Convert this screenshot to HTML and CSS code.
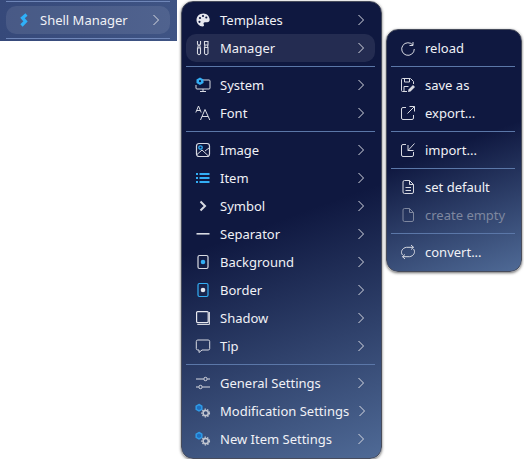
FILE: index.html
```html
<!DOCTYPE html>
<html lang="en">
<head>
  <meta charset="UTF-8">
  <title>Shell Manager</title>
  <link rel="stylesheet" href="styles.css">
</head>
<body>
  <svg class="defs" width="0" height="0">
    <symbol id="chev" viewBox="0 0 8 12"><path d="M1.5 1l5 5-5 5" fill="none" stroke="currentColor" stroke-width="1"/></symbol>
    <symbol id="gears" viewBox="0 0 16 16">
      <path d="M4 1.500l2.800 1.600v3.300L4 8 1.200 6.400V3.100z" fill="#1f6fc0" stroke="#2f9be8" stroke-width="1.500"/>
      <circle cx="10.700" cy="10" r="2.600" fill="none" stroke="#c4c8d2" stroke-width="1.500"/>
      <circle cx="10.700" cy="10" r="3.800" fill="none" stroke="#c4c8d2" stroke-width="1.200" stroke-dasharray="1.500 1.200"/>
    </symbol>
  </svg>

  <div class="strip">
    <div class="sep"></div>
    <div class="row row-on">
      <svg class="ico" viewBox="0 0 16 16"><path d="M11.500 2.500L7.500 6l3 3.500-4 4" fill="none" stroke="#2fb0f8" stroke-width="3.200"/></svg>
      <span class="label">Shell Manager</span>
      <svg class="chev"><use href="#chev"/></svg>
    </div>
    <div class="sep"></div>
  </div>

  <div class="menu menu-main">
    <div class="row">
      <svg class="ico" viewBox="0 0 16 16"><path d="M8.500 1.500C4.500 1.500 1.500 4.300 1.500 8c0 3.500 3 6.500 6 6.500 1.600 0 1.800-1.200 1.300-2-.6-1-.2-2.200 1.200-2.200h2.200c1.600 0 2.500-1 2.500-2.500 0-3.400-2.800-6.300-6.200-6.300z" fill="#e6e7ee"/><circle cx="5" cy="6" r="1.100" fill="#0f1840"/><circle cx="8" cy="4" r="1.100" fill="#0f1840"/><circle cx="11.300" cy="5.500" r="1.100" fill="#0f1840"/><circle cx="4.500" cy="9.800" r="1.100" fill="#0f1840"/></svg>
      <span class="label">Templates</span>
      <svg class="chev"><use href="#chev"/></svg>
    </div>
    <div class="row row-on">
      <svg class="ico" viewBox="0 0 16 16" fill="none" stroke="#d8dae2" stroke-width="1.100"><path d="M2.500 1v3l1 1.200h1l1-1.200V1M3 5.500v2.500M5 5.500v2.500M2.500 8h3v5.500q-1.500 2.200-3 0z"/><path d="M9.500 1.500h3.500v3.500H9.500zM9.800 5v2.500h2.900V5M9.500 7.500h3.500v6q-1.750 2.200-3.500 0z"/></svg>
      <span class="label">Manager</span>
      <svg class="chev"><use href="#chev"/></svg>
    </div>
    <div class="sep"></div>
    <div class="row">
      <svg class="ico" viewBox="0 0 16 16" fill="none" stroke="#d8dae2"><path d="M6 3h8q1 0 1 1v7q0 1-1 1H2q-1 0-1-1V8M5 14.500h6M8 12v2.500"/><path d="M5 .5l3.500 2v3.500L5 8 1.500 6V2.500z" fill="#33aef5" stroke="none"/><circle cx="5" cy="4.200" r="1.100" fill="#0f1840" stroke="none"/></svg>
      <span class="label">System</span>
      <svg class="chev"><use href="#chev"/></svg>
    </div>
    <div class="row">
      <svg class="ico" viewBox="0 0 16 16" fill="none" stroke="#d8dae2"><path d="M.8 7.500L3.500 1l2.700 6.500M1.800 5.500h3.400"/><path d="M5.500 15L10 4.500 14.800 15M7 11.500h6"/></svg>
      <span class="label">Font</span>
      <svg class="chev"><use href="#chev"/></svg>
    </div>
    <div class="sep"></div>
    <div class="row">
      <svg class="ico" viewBox="0 0 16 16" fill="none" stroke="#d8dae2"><rect x="1.500" y="1.500" width="13" height="13" rx="2.500" stroke-width="1.200"/><path d="M2 12.500L7 8l6.500 6"/><path d="M10 9l4-3"/><circle cx="5.500" cy="5.500" r="1.700" stroke="#33aef5" stroke-width="1.300"/></svg>
      <span class="label">Image</span>
      <svg class="chev"><use href="#chev"/></svg>
    </div>
    <div class="row">
      <svg class="ico" viewBox="0 0 16 16" fill="#33aef5"><rect x="1" y="3" width="2" height="2"/><rect x="1" y="7" width="2" height="2"/><rect x="1" y="11" width="2" height="2"/><rect x="4.500" y="3" width="10" height="2"/><rect x="4.500" y="7" width="10" height="2"/><rect x="4.500" y="11" width="10" height="2"/></svg>
      <span class="label">Item</span>
      <svg class="chev"><use href="#chev"/></svg>
    </div>
    <div class="row">
      <svg class="ico" viewBox="0 0 16 16"><path d="M5.500 3.500L10 8l-4.500 4.500" fill="none" stroke="#d8dae2" stroke-width="2"/></svg>
      <span class="label">Symbol</span>
      <svg class="chev"><use href="#chev"/></svg>
    </div>
    <div class="row">
      <svg class="ico" viewBox="0 0 16 16"><rect x="1.500" y="7" width="13" height="1.600" fill="#d8dae2"/></svg>
      <span class="label">Separator</span>
      <svg class="chev"><use href="#chev"/></svg>
    </div>
    <div class="row">
      <svg class="ico" viewBox="0 0 16 16"><rect x="3" y="1.500" width="10" height="13" rx="1.500" fill="none" stroke="#d8dae2" stroke-width="1.200"/><circle cx="8" cy="8" r="2.300" fill="#33aef5"/></svg>
      <span class="label">Background</span>
      <svg class="chev"><use href="#chev"/></svg>
    </div>
    <div class="row">
      <svg class="ico" viewBox="0 0 16 16"><rect x="3" y="1.500" width="10" height="13" rx="1.500" fill="none" stroke="#33aef5" stroke-width="1.200"/><circle cx="8" cy="8" r="2.300" fill="#e6e7ee"/></svg>
      <span class="label">Border</span>
      <svg class="chev"><use href="#chev"/></svg>
    </div>
    <div class="row">
      <svg class="ico" viewBox="0 0 16 16"><rect x="1.600" y="1.600" width="11.600" height="11" rx="1" fill="none" stroke="#e6e7ee" stroke-width="1.200"/><path d="M13.800 2H15v12q0 1-1 1H3q-1 0-1-1h11.800z" fill="#d0d2da"/></svg>
      <span class="label">Shadow</span>
      <svg class="chev"><use href="#chev"/></svg>
    </div>
    <div class="row">
      <svg class="ico" viewBox="0 0 16 16"><path d="M2.800 2h10.400q1.500 0 1.500 1.500v7q0 1.500-1.500 1.500H7l-3 2.500V12H2.800q-1.500 0-1.500-1.500v-7Q1.300 2 2.800 2z" fill="none" stroke="#d8dae2"/></svg>
      <span class="label">Tip</span>
      <svg class="chev"><use href="#chev"/></svg>
    </div>
    <div class="sep"></div>
    <div class="row">
      <svg class="ico" viewBox="0 0 16 16" fill="none" stroke="#d8dae2"><path d="M1 4h7.500M12.500 4H15M1 12h2.500M7.500 12H15"/><circle cx="10.500" cy="4" r="1.700"/><circle cx="5.500" cy="12" r="1.700"/></svg>
      <span class="label">General Settings</span>
      <svg class="chev"><use href="#chev"/></svg>
    </div>
    <div class="row">
      <svg class="ico"><use href="#gears"/></svg>
      <span class="label">Modification Settings</span>
      <svg class="chev"><use href="#chev"/></svg>
    </div>
    <div class="row">
      <svg class="ico"><use href="#gears"/></svg>
      <span class="label">New Item Settings</span>
      <svg class="chev"><use href="#chev"/></svg>
    </div>
  </div>

  <div class="menu menu-sub">
    <div class="row">
      <svg class="ico" viewBox="0 0 16 16" fill="none" stroke="#d8dae2"><path d="M13 2v3.500H9.500M13 5.200A6.300 6.300 0 1 0 14.300 9"/></svg>
      <span class="label">reload</span>
    </div>
    <div class="sep"></div>
    <div class="row">
      <svg class="ico" viewBox="0 0 16 16" fill="none" stroke="#d8dae2"><path d="M7 14.500H2.500q-1 0-1-1v-11q0-1 1-1h8l3 3V7M4.500 1.500V5h5V1.500M4 14v-4.500h4.500"/><path d="M8 15l.5-2.500L13 8l2 2-4.500 4.500z" fill="#d8dae2" stroke="none"/></svg>
      <span class="label">save as</span>
    </div>
    <div class="row">
      <svg class="ico" viewBox="0 0 16 16" fill="none" stroke="#d8dae2"><path d="M6 2.500H3q-1.500 0-1.500 1.500v9q0 1.500 1.500 1.500h9q1.500 0 1.500-1.500v-3M9.500 1.500h5v5M14.500 1.500L7.500 8.500"/></svg>
      <span class="label">export...</span>
    </div>
    <div class="sep"></div>
    <div class="row">
      <svg class="ico" viewBox="0 0 16 16" fill="none" stroke="#d8dae2"><path d="M6 2.500H3q-1.500 0-1.500 1.500v9q0 1.500 1.500 1.500h9q1.500 0 1.500-1.500v-3M8 3v5.500h5.500M8 8.500l6.500-7"/></svg>
      <span class="label">import...</span>
    </div>
    <div class="sep"></div>
    <div class="row">
      <svg class="ico" viewBox="0 0 16 16" fill="none" stroke="#d8dae2"><path d="M3 3q0-1.500 1.500-1.500H9.500L13.500 5.500V13q0 1.500-1.500 1.500H4.500Q3 14.500 3 13zM9.500 1.500V5.500h4M5.500 8.500h5.500M5.500 11.500h5.500"/></svg>
      <span class="label">set default</span>
    </div>
    <div class="row row-off">
      <svg class="ico" viewBox="0 0 16 16" fill="none" stroke="currentColor"><path d="M3 3q0-1.500 1.500-1.500H9.500L13.500 5.500V13q0 1.500-1.500 1.500H4.500Q3 14.500 3 13zM9.500 1.500V5.500h4"/></svg>
      <span class="label">create empty</span>
    </div>
    <div class="sep"></div>
    <div class="row">
      <svg class="ico" viewBox="0 0 16 16" fill="none" stroke="#d8dae2"><path d="M2.500 11A6 5 0 0 1 6.500 3.300H13.500M11 1l2.500 2.300L11 5.600M13.500 5A6 5 0 0 1 9.500 12.700H2.500M5 10.400L2.500 12.700 5 15"/></svg>
      <span class="label">convert...</span>
    </div>
  </div>
</body>
</html>
```

FILE: styles.css
```css
html, body {
  background: #fff;
}
body {
  margin: 0;
  display: flex;
  align-items: flex-start;
  font-family: "Noto Sans", sans-serif;
  font-size: 13px;
  color: #f0f1f6;
}
.defs {
  position: absolute;
}
.strip {
  width: 177px;
  height: 41px;
  box-sizing: border-box;
  padding: 1px 7px 0 6px;
  background: linear-gradient(90deg, #36497a, #3f5484);
}
.strip .sep {
  background: #6f86b8;
}
.strip .sep:first-child {
  margin-top: 0;
}
.menu {
  box-sizing: border-box;
  border: 1px solid #474c5c;
  border-radius: 12px;
  padding: 4px 6px 4px 4px;
  background: linear-gradient(160deg, #0f1840 0%, #0f1840 48%, #4f6a96 100%);
  box-shadow: 0 1px 3px rgba(0, 0, 0, .6);
}
.menu-main {
  width: 201px;
  margin: 1px 0 0 4px;
  height: 458px;
}
.menu-sub {
  width: 136px;
  margin: 29px 0 0 4px;
  height: 243px;
}
.row {
  display: flex;
  align-items: center;
  gap: 9px;
  height: 28px;
  padding: 0 10px 0 9px;
  border-radius: 10px;
}
.row-on {
  background: rgba(255, 255, 255, .09);
}
.row-off {
  color: #7e879f;
}
.ico {
  width: 16px;
  height: 16px;
  flex: none;
}
.label {
  flex: 1;
  white-space: nowrap;
}
.chev {
  width: 8px;
  height: 12px;
  flex: none;
  color: #d8dae2;
}
.sep {
  height: 1px;
  margin: 4px 0;
  background: #5b77a8;
}
```
